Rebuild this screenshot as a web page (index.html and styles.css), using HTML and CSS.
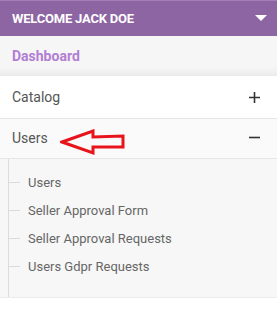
FILE: index.html
```html
<!DOCTYPE html>
<html>
<head>
<meta charset="utf-8">
<link rel="stylesheet" href="styles.css">
</head>
<body>
<div class="sidebar">
  <div class="welcome">
    <span class="welcome-text">WELCOME JACK DOE</span>
    <svg class="caret" width="12" height="6" viewBox="0 0 12 6"><polygon points="0,0 12,0 6,6" fill="#fff"/></svg>
  </div>
  <div class="dashboard">Dashboard</div>
  <div class="row">
    <span>Catalog</span>
    <svg class="sign" width="11" height="11" viewBox="0 0 11 11"><path d="M0 5.5H11M5.5 0V11" stroke="#333" stroke-width="1.6"/></svg>
  </div>
  <div class="row open">
    <span>Users</span>
    <svg class="sign" width="11" height="11" viewBox="0 0 11 11"><path d="M0 5.5H11" stroke="#333" stroke-width="1.6"/></svg>
    <svg class="arrow" width="70" height="30" viewBox="0 0 70 30"><polygon points="2,13 33,2 33,8 63,7 63,18 33,18 33,24" fill="none" stroke="#e8141c" stroke-width="3" stroke-linejoin="miter"/></svg>
  </div>
  <ul class="submenu">
    <li>Users</li>
    <li>Seller Approval Form</li>
    <li>Seller Approval Requests</li>
    <li>Users Gdpr Requests</li>
  </ul>
</div>
</body>
</html>
```
FILE: styles.css
```css
* { box-sizing: border-box; }
body {
  margin: 0;
  background: #fff;
  font-family: Roboto, "Liberation Sans", sans-serif;
}
.sidebar { width: 277px; }
.welcome {
  height: 36px;
  background: #8e65a3;
  border-top: 1px solid #a27fb5;
  display: flex;
  align-items: center;
  justify-content: space-between;
  padding: 0 10px 0 12px;
  color: #fff;
}
.welcome-text { font-weight: 700; font-size: 13px; letter-spacing: -0.2px; }
.caret { margin-top: -1px; }
.dashboard {
  height: 40px;
  background: #f6f6f6;
  box-shadow: inset 0 -10px 10px -8px rgba(0,0,0,0.07);
  display: flex;
  align-items: center;
  padding: 0 12px 0;
  color: #b27dd3;
  font-weight: 700;
  font-size: 14px;
}
.row {
  position: relative;
  height: 43px;
  border-bottom: 1px solid #e6e6e6;
  display: flex;
  align-items: center;
  justify-content: space-between;
  padding: 0 17px 0 12px;
  color: #555;
  font-size: 14px;
  background: #fff;
}
.row.open { height: 40px; background: #fafafa; padding-bottom: 2px; }
.arrow { position: absolute; left: 60px; top: 10px; }
.submenu {
  list-style: none;
  margin: 0;
  padding: 10px 0 16px 0;
  background: #f7f7f7;
  border-bottom: 1px solid #ececec;
  position: relative;
}
.submenu::before {
  content: "";
  position: absolute;
  left: 8px;
  top: 0;
  bottom: 0;
  width: 1px;
  background: #dcdcdc;
}
.submenu li {
  position: relative;
  height: 28px;
  line-height: 28px;
  padding-left: 28px;
  font-size: 13px;
  color: #666;
}
.submenu li::before {
  content: "";
  position: absolute;
  left: 9px;
  top: 13px;
  width: 11px;
  height: 1px;
  background: #dcdcdc;
}
```
